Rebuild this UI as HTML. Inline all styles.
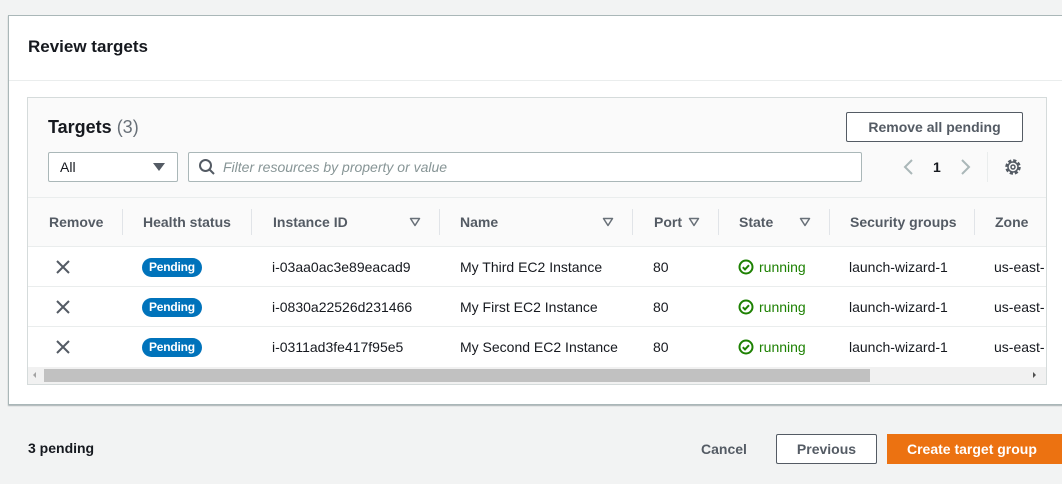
<!DOCTYPE html>
<html><head><style>
*{box-sizing:border-box;margin:0;padding:0}
body{width:1062px;height:484px;background:#f2f3f3;font-family:"Liberation Sans",sans-serif;font-size:14px;color:#16191f;position:relative;overflow:hidden}
.a{position:absolute;white-space:nowrap}
.hd{font-weight:bold;color:#545b64}
.pill{position:absolute;background:#0073bb;color:#fff;font-size:12px;font-weight:bold;border-radius:10px;height:19px;line-height:19px;padding:0 7px;letter-spacing:-0.2px}
.sep{position:absolute;width:1px;height:26px;background:#e1e4e8;top:209px}
.run{color:#1d8102}
</style></head><body>
<div class="a" style="left:8px;top:15px;width:1060px;height:390px;background:#fff;border:1px solid #aab7b8;border-right:none;box-shadow:0 1px 1px rgba(0,28,36,.3)"></div>
<div class="a" style="left:9px;top:80px;width:1053px;height:1px;background:#eaeded"></div>
<div class="a" style="left:28px;top:37px;font-size:17px;font-weight:bold">Review targets</div>
<div class="a" style="left:27px;top:97px;width:1020px;height:288px;background:#fafafa;border:1px solid #d5dbdb"></div>
<div class="a" style="left:28px;top:197px;width:1018px;height:1px;background:#eaeded"></div>
<div class="a" style="left:28px;top:246px;width:1018px;height:122px;background:#fff;border-top:1px solid #eaeded"></div>
<div class="a" style="left:28px;top:286px;width:1018px;height:1px;background:#eaeded"></div>
<div class="a" style="left:28px;top:326px;width:1018px;height:1px;background:#eaeded"></div>
<div class="a" style="left:48px;top:117px;font-size:18px;font-weight:bold">Targets <span style="font-weight:normal;color:#687078">(3)</span></div>
<div class="a" style="left:846px;top:112px;width:177px;height:30px;border:1px solid #545b64;border-radius:2px;background:#fff;text-align:center;line-height:28px;font-weight:bold;color:#545b64">Remove all pending</div>
<div class="a" style="left:48px;top:152px;width:130px;height:30px;border:1px solid #aab7b8;border-radius:2px;background:#fff;padding-left:11px;line-height:28px">All</div>
<svg class="a" style="left:152px;top:162px" width="14" height="10"><path d="M1 1h12L7 9z" fill="#545b64"/></svg>
<div class="a" style="left:188px;top:152px;width:674px;height:30px;border:1px solid #aab7b8;border-radius:2px;background:#fff"></div>
<svg class="a" style="left:198px;top:158px" width="18" height="18" viewBox="0 0 18 18"><circle cx="7.5" cy="7.5" r="5.5" fill="none" stroke="#545b64" stroke-width="2"/><path d="M11.5 11.5L16 16" stroke="#545b64" stroke-width="2"/></svg>
<div class="a" style="left:223px;top:159px;color:#879596;font-style:italic">Filter resources by property or value</div>
<svg class="a" style="left:900px;top:157px" width="80" height="20"><path d="M12 3L5 10l7 7" fill="none" stroke="#aab7b8" stroke-width="2"/><path d="M62 3l7 7-7 7" fill="none" stroke="#aab7b8" stroke-width="2"/></svg>
<div class="a" style="left:933px;top:159px;font-weight:bold">1</div>
<div class="a" style="left:987px;top:152px;width:1px;height:30px;background:#eaeded"></div>
<svg class="a" style="left:1004px;top:158px" width="18" height="18" viewBox="0 0 18 18"><circle cx="9" cy="9" r="6.5" fill="none" stroke="#545b64" stroke-width="2.5" stroke-dasharray="3.2 1.9"/><circle cx="9" cy="9" r="5" fill="none" stroke="#545b64" stroke-width="1.5"/><circle cx="9" cy="9" r="2" fill="none" stroke="#545b64" stroke-width="1.5"/></svg>
<div class="a hd" style="left:49px;top:214px">Remove</div>
<div class="sep" style="left:122px"></div>
<div class="a hd" style="left:143px;top:214px">Health status</div>
<div class="sep" style="left:251px"></div>
<div class="a hd" style="left:273px;top:214px">Instance ID</div>
<svg class="a" style="left:409px;top:217px" width="12" height="10"><path d="M1.5 1.5h9L6 8.5z" fill="none" stroke="#687078" stroke-width="1.5" stroke-linejoin="round"/></svg>
<div class="sep" style="left:439px"></div>
<div class="a hd" style="left:460px;top:214px">Name</div>
<svg class="a" style="left:602px;top:217px" width="12" height="10"><path d="M1.5 1.5h9L6 8.5z" fill="none" stroke="#687078" stroke-width="1.5" stroke-linejoin="round"/></svg>
<div class="sep" style="left:632px"></div>
<div class="a hd" style="left:654px;top:214px">Port</div>
<svg class="a" style="left:688px;top:217px" width="12" height="10"><path d="M1.5 1.5h9L6 8.5z" fill="none" stroke="#687078" stroke-width="1.5" stroke-linejoin="round"/></svg>
<div class="sep" style="left:718px"></div>
<div class="a hd" style="left:739px;top:214px">State</div>
<svg class="a" style="left:799px;top:217px" width="12" height="10"><path d="M1.5 1.5h9L6 8.5z" fill="none" stroke="#687078" stroke-width="1.5" stroke-linejoin="round"/></svg>
<div class="sep" style="left:829px"></div>
<div class="a hd" style="left:850px;top:214px">Security groups</div>
<div class="sep" style="left:974px"></div>
<div class="a hd" style="left:995px;top:214px">Zone</div>

<!-- rows -->
<svg class="a" style="left:56px;top:260px" width="14" height="14"><path d="M1 1l12 12M13 1L1 13" stroke="#545b64" stroke-width="2"/></svg>
<div class="pill" style="left:142px;top:258px">Pending</div>
<div class="a" style="left:272px;top:259px">i-03aa0ac3e89eacad9</div>
<div class="a" style="left:460px;top:259px">My Third EC2 Instance</div>
<div class="a" style="left:653px;top:259px">80</div>
<svg class="a" style="left:738px;top:259px" width="16" height="16"><circle cx="8" cy="8" r="6.5" fill="none" stroke="#1d8102" stroke-width="2"/><path d="M4.8 8.2l2.2 2.2 4-4.2" fill="none" stroke="#1d8102" stroke-width="2"/></svg>
<div class="a run" style="left:759px;top:259px">running</div>
<div class="a" style="left:849px;top:259px">launch-wizard-1</div>
<div class="a" style="left:994px;top:259px">us-east-</div>

<svg class="a" style="left:56px;top:300px" width="14" height="14"><path d="M1 1l12 12M13 1L1 13" stroke="#545b64" stroke-width="2"/></svg>
<div class="pill" style="left:142px;top:298px">Pending</div>
<div class="a" style="left:272px;top:299px">i-0830a22526d231466</div>
<div class="a" style="left:460px;top:299px">My First EC2 Instance</div>
<div class="a" style="left:653px;top:299px">80</div>
<svg class="a" style="left:738px;top:299px" width="16" height="16"><circle cx="8" cy="8" r="6.5" fill="none" stroke="#1d8102" stroke-width="2"/><path d="M4.8 8.2l2.2 2.2 4-4.2" fill="none" stroke="#1d8102" stroke-width="2"/></svg>
<div class="a run" style="left:759px;top:299px">running</div>
<div class="a" style="left:849px;top:299px">launch-wizard-1</div>
<div class="a" style="left:994px;top:299px">us-east-</div>

<svg class="a" style="left:56px;top:340px" width="14" height="14"><path d="M1 1l12 12M13 1L1 13" stroke="#545b64" stroke-width="2"/></svg>
<div class="pill" style="left:142px;top:338px">Pending</div>
<div class="a" style="left:272px;top:339px">i-0311ad3fe417f95e5</div>
<div class="a" style="left:460px;top:339px">My Second EC2 Instance</div>
<div class="a" style="left:653px;top:339px">80</div>
<svg class="a" style="left:738px;top:339px" width="16" height="16"><circle cx="8" cy="8" r="6.5" fill="none" stroke="#1d8102" stroke-width="2"/><path d="M4.8 8.2l2.2 2.2 4-4.2" fill="none" stroke="#1d8102" stroke-width="2"/></svg>
<div class="a run" style="left:759px;top:339px">running</div>
<div class="a" style="left:849px;top:339px">launch-wizard-1</div>
<div class="a" style="left:994px;top:339px">us-east-</div>

<!-- scrollbar -->
<div class="a" style="left:28px;top:367px;width:1018px;height:17px;background:#f1f1f1"></div>
<div class="a" style="left:44px;top:369px;width:826px;height:13px;background:#c1c1c1"></div>
<div class="a" style="left:33px;top:372px;width:0;height:0;border-top:3px solid transparent;border-bottom:3px solid transparent;border-right:3px solid #a3a3a3"></div>
<div class="a" style="left:1033px;top:372px;width:0;height:0;border-top:3px solid transparent;border-bottom:3px solid transparent;border-left:3px solid #505050"></div>

<!-- footer -->
<div class="a" style="left:28px;top:440px;font-weight:bold">3 pending</div>
<div class="a" style="left:701px;top:441px;font-weight:bold;color:#545b64">Cancel</div>
<div class="a" style="left:776px;top:434px;width:101px;height:30px;border:1px solid #545b64;border-radius:2px;background:#fff;text-align:center;line-height:28px;font-weight:bold;color:#545b64">Previous</div>
<div class="a" style="left:887px;top:434px;width:175px;height:30px;background:#ec7211;color:#fff;font-weight:bold;line-height:30px;padding-left:20px">Create target group</div>
</body></html>
